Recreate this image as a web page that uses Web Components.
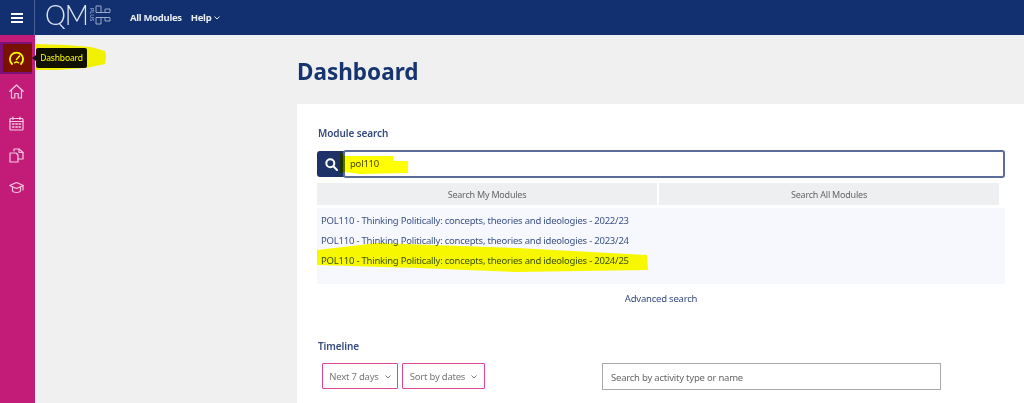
<!DOCTYPE html>
<html>
<head>
<meta charset="utf-8">
<title>Dashboard</title>
<style>
html, body { margin: 0; padding: 0; height: 403px; overflow: hidden; }
body { font-family: "Noto Sans", "Open Sans", sans-serif; background: #f0f0f0; position: relative; }
qm-mark { position: absolute; }
</style>
</head>
<body>
<qm-app>
    <qm-header></qm-header>
    <div slot="body-side"><qm-sidebar></qm-sidebar></div>
    <qm-page slot="body-main" title="Dashboard">
        <qm-module-search></qm-module-search>
        <qm-timeline></qm-timeline>
    </qm-page>
</qm-app>

<qm-mark x="36" y="43" w="70" h="28" d="M0 1 L30 2 L55 4 L69 8 L70 14 L69 21 L50 25 L20 27 L0 27 Z"></qm-mark>
<qm-mark x="3" y="44" w="29" h="28" d="M0 0 H29 V28 H0 Z"></qm-mark>
<qm-mark x="340" y="152" w="68" h="22" d="M0 0 L5 4 L53 4 L54 9 L68 9 L68 21 L20 22 L5 20 L0 21 Z"></qm-mark>
<qm-mark x="317" y="243" w="331" h="30" d="M0 7 L60 0 L200 5 L330 12 L331 27 L200 29 L100 25 L0 22 Z"></qm-mark>

<script>
class QmApp extends HTMLElement {
    constructor() {
        super();
        this.attachShadow({ mode: "open" });
        this.shadowRoot.innerHTML = `
        <style>
            :host { display: block; height: 403px; }
            .body { display: flex; height: 368px; }
            .side { flex: none; }
            .main { flex: 1; min-width: 0; }
        </style>
        <slot></slot>
        <div class="body">
            <div class="side"><slot name="body-side"></slot></div>
            <div class="main"><slot name="body-main"></slot></div>
        </div>
        `;
    }
}
customElements.define("qm-app", QmApp);

class QmHeader extends HTMLElement {
    constructor() {
        super();
        this.attachShadow({ mode: "open" });
        this.shadowRoot.innerHTML = `
        <style>
            :host { display: flex; align-items: center; height: 35px; background: #12306f; color: #fff; font-family: "Noto Sans", sans-serif; }
            .burger { width: 34px; height: 35px; display: flex; align-items: center; justify-content: center; border-right: 1px solid #4a6090; flex: none; }
            .logo { display: flex; align-items: center; margin-left: 10px; width: 85px; height: 35px; flex: none; color: #dfe5f0; }
            .qm { font-family: "Lato", sans-serif; font-weight: 300; font-size: 26.5px; letter-spacing: -1.100px; line-height: 30px; margin-top: -5px; }
            .plus { font-size: 5.5px; writing-mode: vertical-rl; line-height: 6px; margin: -6px 0 0 1px; color: #b4c0d8; }
            .logo svg { margin: -6px 0 0 0; }
            nav { display: flex; align-items: center; gap: 9px; font-size: 9.5px; letter-spacing: -.3px; font-weight: 700; color: #e8ecf4; }
            nav svg { margin-left: 3px; vertical-align: 1px; }
        </style>
        <div class="burger">
            <svg width="12" height="10" viewBox="0 0 12 10"><path d="M0 1h12M0 5h12M0 9h12" stroke="#fff" stroke-width="1.8" fill="none"/></svg>
        </div>
        <div class="logo">
            <span class="qm">QM</span><span class="plus">PLUS</span>
            <svg width="16" height="22" viewBox="0 0 16 22" fill="none" stroke="#a9b7d2" stroke-width=".9"><path d="M1 8.500V2h5v6.500M1 13.500V20h5v-6.500M1 8.500h14M1 13.500h14M10 8V5h5v3M10 14v3h5v-3"/></svg>
        </div>
        <nav>
            <span>All Modules</span>
            <span>Help<svg width="6" height="4" viewBox="0 0 6 4"><path d="M.5.5 3 3 5.5.5" stroke="#e8ecf4" fill="none"/></svg></span>
        </nav>
        `;
    }
}
customElements.define("qm-header", QmHeader);

class QmSidebar extends HTMLElement {
    constructor() {
        super();
        this.attachShadow({ mode: "open" });
        const common = `fill="none" stroke="currentColor" stroke-width="1.2" stroke-linecap="round" stroke-linejoin="round"`;
        this.shadowRoot.innerHTML = `
        <style>
            :host { display: flex; flex-direction: column; align-items: flex-start; width: 35px; height: 368px; background: #c21c78; color: #f6c9e2; padding-top: 7px; box-sizing: border-box; position: relative; font-family: "Noto Sans", sans-serif; }
            .item { width: 32px; height: 32px; display: flex; align-items: center; justify-content: center; }
            .active { background: #7a1078; color: #fff; }
            .gap { margin-top: 1px; }
            .tip { position: absolute; left: 36px; top: 13px; height: 20px; width: 51px; padding-bottom: 1px; box-sizing: border-box; background: #111; color: #fff; font-size: 8.5px; letter-spacing: -.15px; display: flex; align-items: center; justify-content: center; border-radius: 2px; white-space: nowrap; }
            .tip::before { content: ""; position: absolute; left: -4px; top: 7px; border: 3px solid transparent; border-left: 0; border-right: 4px solid #111; }
        </style>
        <div class="item active"><svg width="15" height="15" viewBox="0 0 15 15" fill="none" stroke="currentColor" stroke-width="1.8" stroke-linecap="round"><path d="M3 13a6.600 6.600 0 1 1 9 0"/><path d="M5.500 11.800a3 3 0 0 1 4 0" stroke-width="1.400"/><path d="M7.500 8.500l3-3.500" stroke-width="1.500"/></svg></div>
        <div class="tip">Dashboard</div>
        <div class="item gap"><svg width="15" height="15" viewBox="0 0 15 15" ${common}><path d="M.8 7.3 7.5 1l6.7 6.3"/><path d="M2.5 6v8h3.3V9.5h3.4V14h3.3V6"/></svg></div>
        <div class="item"><svg width="15" height="15" viewBox="0 0 15 15" ${common}><rect x="1" y="2.5" width="13" height="11.5" rx="1"/><path d="M1 5.5h13M4 1v2.5M11 1v2.5"/><path d="M3.5 8h1.5M6.8 8h1.5M10 8h1.5M3.5 11h1.5M6.8 11h1.5M10 11h1.5" stroke-width="1.4"/></svg></div>
        <div class="item"><svg width="15" height="15" viewBox="0 0 15 15" ${common}><path d="M1 5h6l2 2v7H1z"/><path d="M5 3V1h5l4 3.5V11h-5"/><path d="M10 1v3.5h4"/></svg></div>
        <div class="item"><svg width="15" height="13" viewBox="0 0 15 13" ${common}><path d="M.7 4.5 7.5 1.500l6.800 3-6.800 3z"/><path d="M3.500 6v4c1 2 7 2 8 0V6"/><path d="M14 5v4"/></svg></div>
        `;
    }
}
customElements.define("qm-sidebar", QmSidebar);

class QmPage extends HTMLElement {
    constructor() {
        super();
        this.attachShadow({ mode: "open" });
    }
    connectedCallback() {
        const title = this.getAttribute("title");
        this.shadowRoot.innerHTML = `
        <style>
            :host { display: block; padding-left: 262px; height: 368px; overflow: hidden; font-family: "Noto Sans", sans-serif; }
            h1 { margin: 0; height: 69px; padding: 21px 0 0; box-sizing: border-box; font-size: 22.5px; line-height: 32px; font-weight: 700; color: #16346f; }
            .card { background: #fff; height: 299px; padding: 20px 19px 0 20px; box-sizing: border-box; }
        </style>
        <h1>${title}</h1>
        <div class="card"><slot></slot></div>
        `;
    }
}
customElements.define("qm-page", QmPage);

class QmModuleSearch extends HTMLElement {
    constructor() {
        super();
        this.attachShadow({ mode: "open" });
        const name = "Thinking Politically: concepts, theories and ideologies";
        const rows = ["2022/23", "2023/24", "2024/25"].map(y => `<div class="row">POL110 - ${name} - ${y}</div>`).join("");
        this.shadowRoot.innerHTML = `
        <style>
            :host { display: block; font-family: "Noto Sans", sans-serif; font-size: 9.5px; letter-spacing: -.22px; }
            h2 { margin: 0 0 8px 1px; font-size: 10px; letter-spacing: -.1px; line-height: 18px; font-weight: 600; color: #34497f; height: 18px; }
            .search { display: flex; height: 28px; }
            .btn { width: 28px; height: 26px; margin-top: 1px; background: #1f3268; border-radius: 3px 0 0 3px; display: flex; align-items: center; justify-content: center; flex: none; }
            .field { flex: 1; margin-left: -2px; border: 2px solid #5b6c9b; border-radius: 3px; background: #fff; color: #444; padding-left: 5px; line-height: 24px; box-sizing: border-box; }
            .tabs { display: grid; grid-template-columns: 340px 340px; gap: 2px; margin-top: 5px; width: 682px; }
            .tabs div { height: 22px; line-height: 23px; background: #eeeff0; color: #666; text-align: center; font-size: 9px; }
            .results { background: #f7f8fd; height: 76px; margin-top: 3px; padding: 3px 0 0 4px; box-sizing: border-box; color: #3a5185; }
            .row { height: 20px; line-height: 20px; white-space: nowrap; }
            .adv { text-align: center; margin-top: 7px; height: 16px; line-height: 16px; color: #34497f; }
        </style>
        <h2>Module search</h2>
        <div class="search">
            <div class="btn"><svg width="13" height="13" viewBox="0 0 13 13" fill="none" stroke="#fff" stroke-width="2"><circle cx="5.3" cy="5.3" r="4"/><path d="M8.3 8.3 12 12" stroke-linecap="round"/></svg></div>
            <div class="field">pol110</div>
        </div>
        <div class="tabs"><div>Search My Modules</div><div>Search All Modules</div></div>
        <div class="results">${rows}</div>
        <div class="adv">Advanced search</div>
        `;
    }
}
customElements.define("qm-module-search", QmModuleSearch);

class QmTimeline extends HTMLElement {
    constructor() {
        super();
        this.attachShadow({ mode: "open" });
        const caret = `<svg width="6" height="4" viewBox="0 0 6 4"><path d="M.5.5 3 3 5.5.5" stroke="#777" fill="none"/></svg>`;
        this.shadowRoot.innerHTML = `
        <style>
            :host { display: block; margin-top: 30px; font-family: "Noto Sans", sans-serif; font-size: 9.5px; letter-spacing: -.22px; color: #777; }
            h2 { margin: 0 0 0 1px; font-size: 10px; letter-spacing: -.1px; line-height: 18px; height: 18px; font-weight: 600; color: #34497f; }
            .bar { display: flex; margin: 8px 0 0 5px; gap: 4px; height: 27px; }
            .sel { border: 1px solid #e0479a; border-radius: 1px; box-sizing: border-box; display: flex; align-items: center; justify-content: center; gap: 6px; height: 26px; padding-top: 1px; background: #fff; }
            .sel.a { width: 76px; }
            .sel.b { width: 83px; }
            .q { margin-left: 113px; width: 339px; height: 27px; box-sizing: border-box; border: 1px solid #aaa; line-height: 27px; padding-left: 8px; color: #666; }
        </style>
        <h2>Timeline</h2>
        <div class="bar">
            <div class="sel a">Next 7 days ${caret}</div>
            <div class="sel b">Sort by dates ${caret}</div>
            <div class="q">Search by activity type or name</div>
        </div>
        `;
    }
}
customElements.define("qm-timeline", QmTimeline);

// yellow highlighter strokes drawn over the screenshot
class QmMark extends HTMLElement {
    constructor() {
        super();
        this.attachShadow({ mode: "open" });
    }
    connectedCallback() {
        const w = this.getAttribute("w"), h = this.getAttribute("h");
        this.style.left = this.getAttribute("x") + "px";
        this.style.top = this.getAttribute("y") + "px";
        this.shadowRoot.innerHTML = `
        <style>
            :host { display: block; width: ${w}px; height: ${h}px; mix-blend-mode: multiply; pointer-events: none; }
            svg { display: block; }
        </style>
        <svg width="${w}" height="${h}" viewBox="0 0 ${w} ${h}"><path d="${this.getAttribute("d")}" fill="#ffff00"/></svg>
        `;
    }
}
customElements.define("qm-mark", QmMark);
</script>
</body>
</html>
